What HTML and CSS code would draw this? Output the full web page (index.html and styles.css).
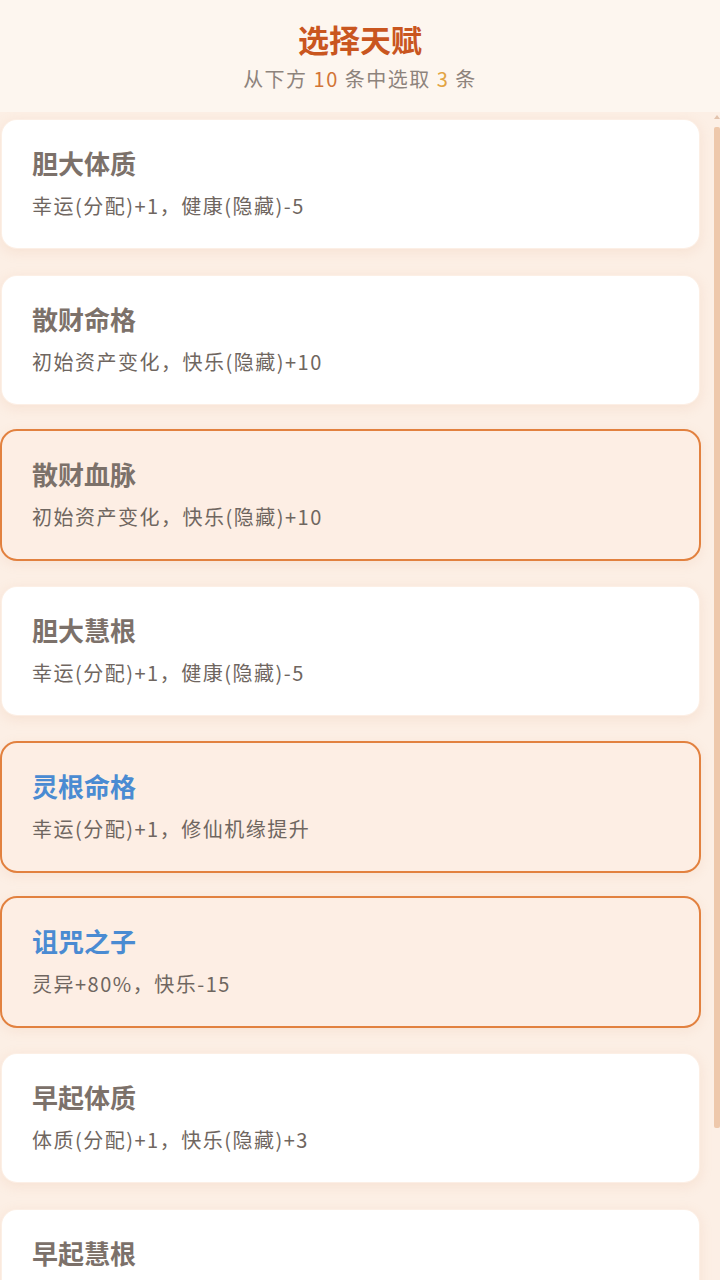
FILE: index.html
```html
<!DOCTYPE html>
<html lang="zh-CN">
<head>
<meta charset="utf-8">
<title>选择天赋</title>
<link rel="stylesheet" href="styles.css">
</head>
<body>
<div class="app">
  <header class="header">
    <h1 class="title">选择天赋</h1>
    <p class="subtitle">从下方 <span class="num-a">10</span> 条中选取 <span class="num-b">3</span> 条</p>
  </header>
  <div class="body">
    <div class="list">
      <div class="card"><div class="card-title">胆大体质</div><div class="card-desc">幸运(分配)+1，健康(隐藏)-5</div></div>
      <div class="card"><div class="card-title">散财命格</div><div class="card-desc">初始资产变化，快乐(隐藏)+10</div></div>
      <div class="card selected"><div class="card-title">散财血脉</div><div class="card-desc">初始资产变化，快乐(隐藏)+10</div></div>
      <div class="card"><div class="card-title">胆大慧根</div><div class="card-desc">幸运(分配)+1，健康(隐藏)-5</div></div>
      <div class="card selected"><div class="card-title blue">灵根命格</div><div class="card-desc">幸运(分配)+1，修仙机缘提升</div></div>
      <div class="card selected"><div class="card-title blue">诅咒之子</div><div class="card-desc">灵异+80%，快乐-15</div></div>
      <div class="card"><div class="card-title">早起体质</div><div class="card-desc">体质(分配)+1，快乐(隐藏)+3</div></div>
      <div class="card"><div class="card-title">早起慧根</div><div class="card-desc">体质(分配)+1，健康(隐藏)+3</div></div>
    </div>
    <div class="scrollbar">
      <div class="arrow"></div>
      <div class="thumb"></div>
    </div>
  </div>
</div>
</body>
</html>
```

FILE: styles.css
```css
* { box-sizing: border-box; }
html, body { margin: 0; padding: 0; }
body {
  width: 720px;
  height: 1280px;
  overflow: hidden;
  background: #fcf0e7;
  font-family: "Noto Sans CJK SC", "Noto Sans", sans-serif;
}
.app {
  display: flex;
  flex-direction: column;
  height: 1280px;
}
.header {
  height: 112px;
  flex: none;
  background: #fdf6ef;
  text-align: center;
  padding-top: 18px;
}
.title {
  margin: 0;
  font-size: 31px;
  line-height: 42px;
  font-weight: 700;
  color: #c9561f;
}
.subtitle {
  margin: 5px 0 0;
  font-size: 20px;
  line-height: 28px;
  letter-spacing: 1.5px;
  color: #8d837c;
}
.num-a { color: #d27436; }
.num-b { color: #e3a443; }
.body {
  flex: 1;
  display: flex;
  min-height: 0;
  background: #fcefe5;
}
.list {
  flex: 1;
  overflow: hidden;
  padding: 6px 13px 0 0;
  display: flex;
  flex-direction: column;
  gap: 23.7px;
}
.card {
  flex: none;
  height: 132px;
  border: 2px solid transparent;
  background: #ffffff;
  background-clip: padding-box;
  border-radius: 17px;
  padding: 27px 30px 0;
  box-shadow: 0 3px 12px rgba(225, 170, 130, 0.16);
}
.card.selected {
  background: #fdeee4;
  border-color: #e2813f;
  background-clip: border-box;
}
.card-title {
  font-size: 26px;
  line-height: 32px;
  font-weight: 700;
  color: #7c716a;
}
.card-title.blue { color: #4a8bd2; }
.card-desc {
  margin-top: 14px;
  font-size: 20px;
  line-height: 26px;
  letter-spacing: 1.5px;
  color: #6f6660;
}
.scrollbar {
  width: 6px;
  flex: none;
  display: flex;
  flex-direction: column;
  align-items: center;
}
.arrow {
  margin-top: 3px;
  width: 0;
  height: 0;
  border-left: 3px solid transparent;
  border-right: 3px solid transparent;
  border-bottom: 4px solid #e2c3ad;
}
.thumb {
  margin-top: 8px;
  width: 6px;
  height: 1001px;
  border-radius: 2px;
  background: #eec8ab;
}
```
